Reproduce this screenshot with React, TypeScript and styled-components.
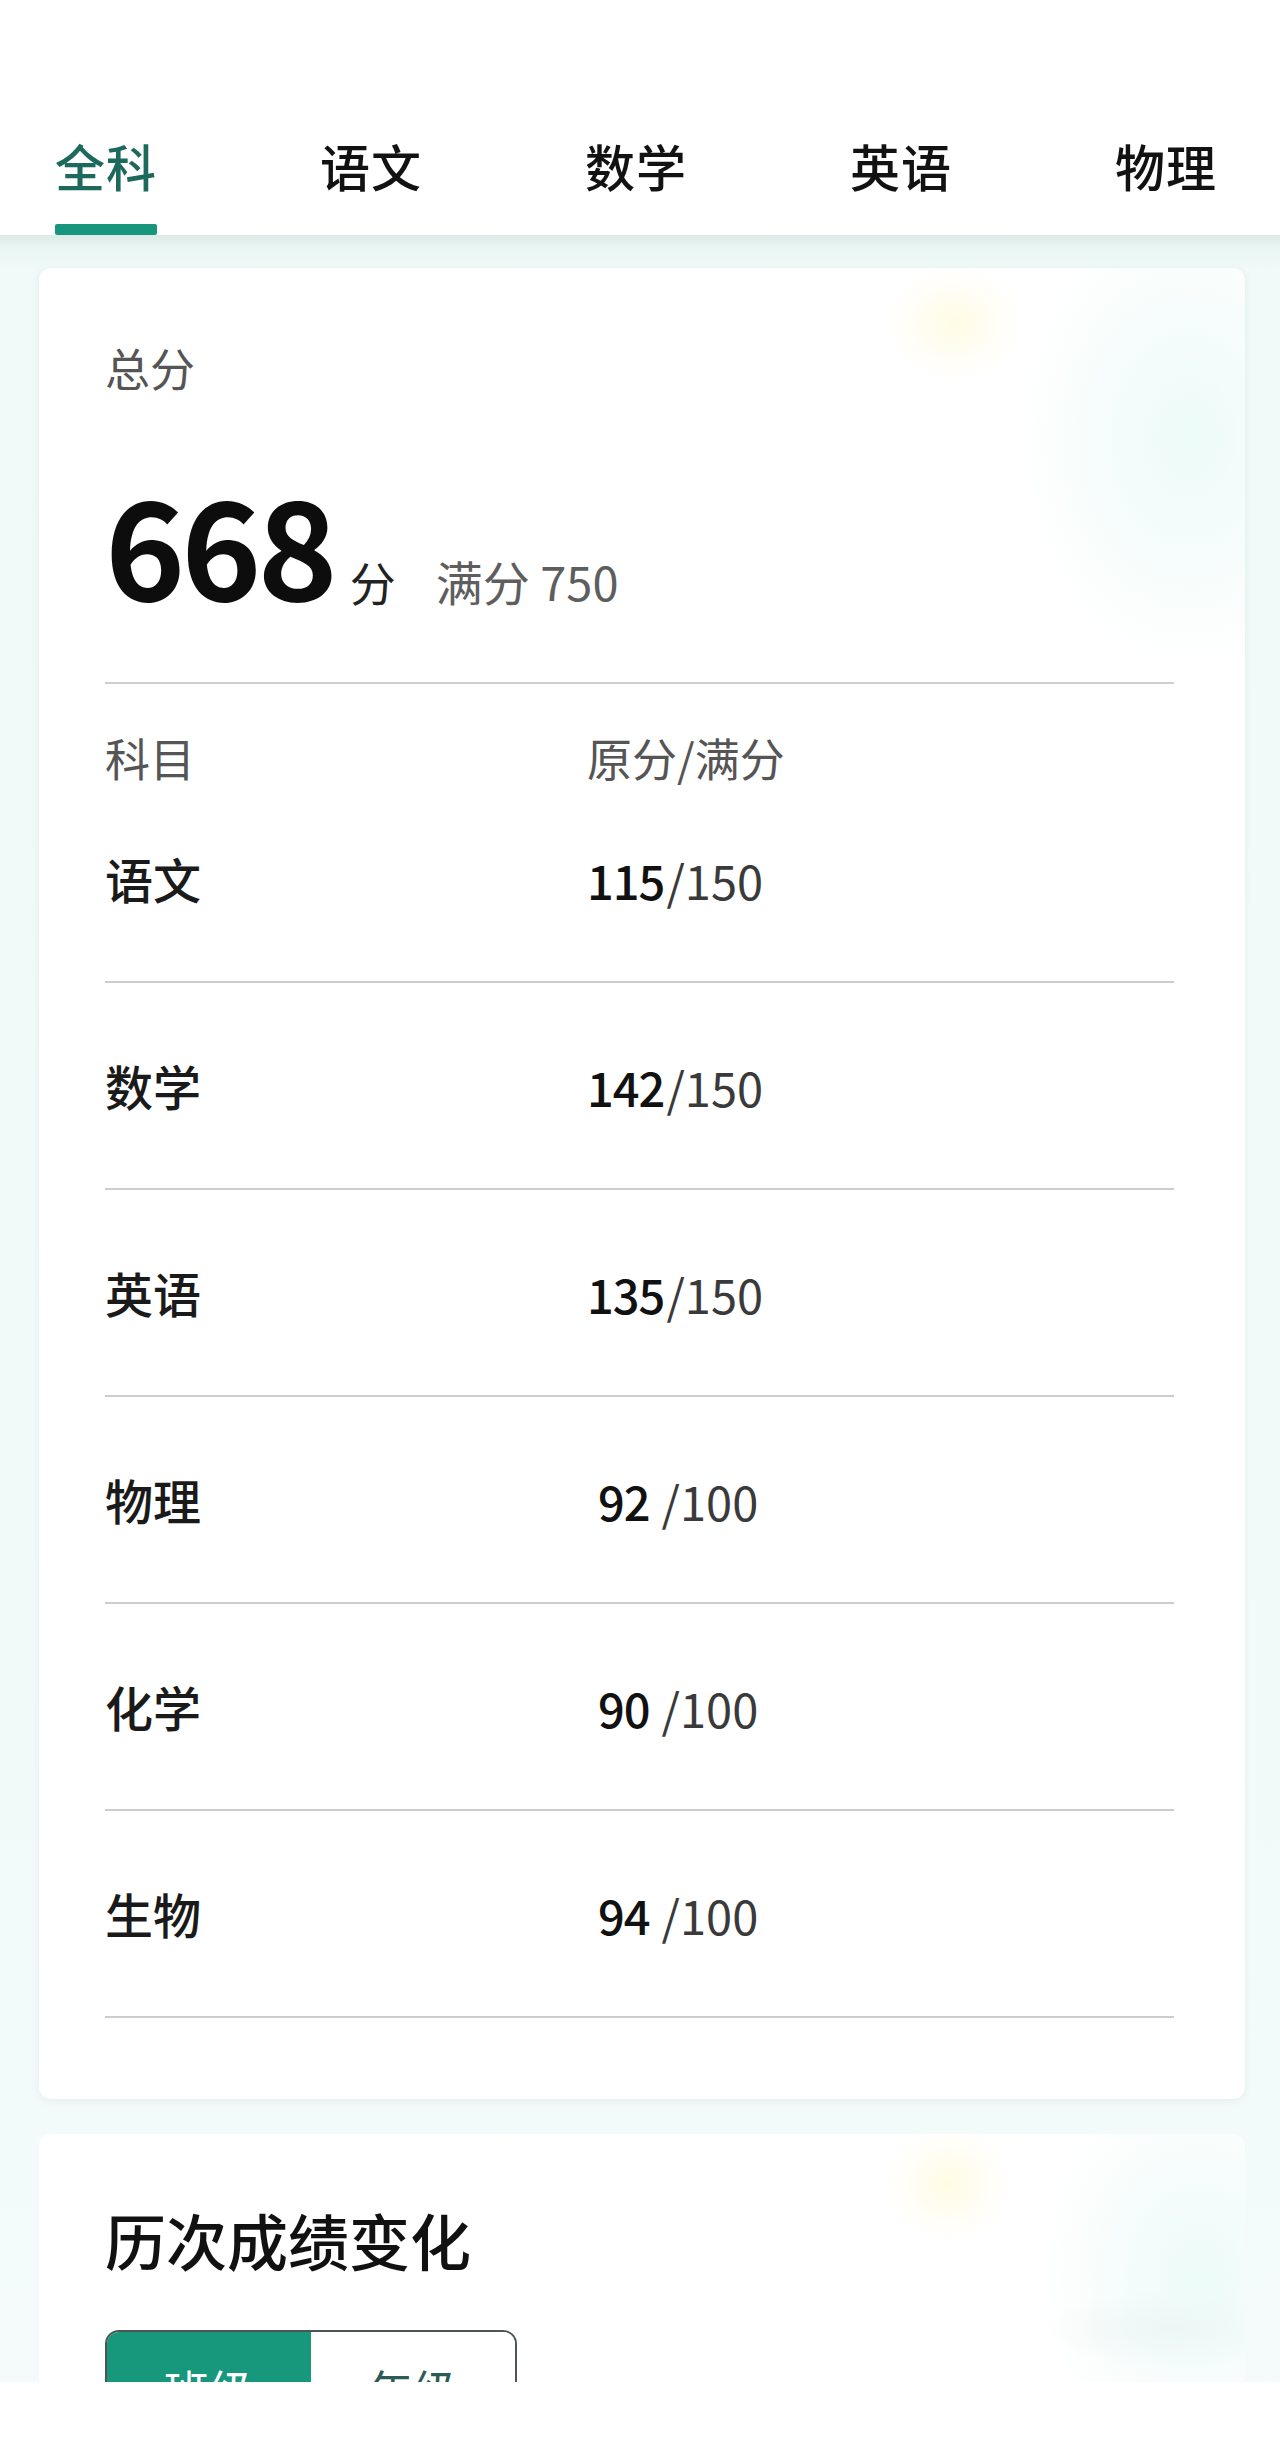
import React from 'react'
import styled, { createGlobalStyle } from 'styled-components'

const GlobalStyle = createGlobalStyle`
  html, body {
    margin: 0;
    padding: 0;
    background: #ffffff;
  }
  body {
    font-family: "Noto Sans CJK SC", "Noto Sans", sans-serif;
    color: #1a1a1a;
  }
`

const tabs = ['全科', '语文', '数学', '英语', '物理']

const scores = [
  { name: '语文', score: '115', full: '150' },
  { name: '数学', score: '142', full: '150' },
  { name: '英语', score: '135', full: '150' },
  { name: '物理', score: '92', full: '100' },
  { name: '化学', score: '90', full: '100' },
  { name: '生物', score: '94', full: '100' },
]

const App = () => {
  return (
    <>
      <GlobalStyle />
      <Screen>
        <Header>
          {tabs.map((t, i) => (
            <Tab key={t}>
              <TabLabel active={i === 0}>{t}</TabLabel>
              <TabLine active={i === 0} />
            </Tab>
          ))}
        </Header>

        <Body>
          <Card>
            <TotalLabel>总分</TotalLabel>
            <TotalLine>
              <TotalNum>668</TotalNum>
              <TotalUnit>分</TotalUnit>
              <TotalFull>满分 750</TotalFull>
            </TotalLine>
            <Divider />

            <HeadRow>
              <NameCol>科目</NameCol>
              <HeadLabel>原分/满分</HeadLabel>
            </HeadRow>

            {scores.map((s, i) => (
              <Row key={s.name} first={i === 0}>
                <NameCol>
                  <RowName>{s.name}</RowName>
                </NameCol>
                <Value>
                  <Score short={s.score.length < 3}>{s.score}</Score>
                  <Full>/{s.full}</Full>
                </Value>
              </Row>
            ))}
          </Card>

          <HistoryCard>
            <HistoryTitle>历次成绩变化</HistoryTitle>
            <Segment>
              <SegButton active>班级</SegButton>
              <SegButton>年级</SegButton>
            </Segment>
          </HistoryCard>
        </Body>
      </Screen>
    </>
  )
}

export default App

const Screen = styled.div`
  width: 1280px;
  height: 2382px;
  overflow: hidden;
  background: #f3fbf9;
`

const Header = styled.div`
  height: 235px;
  background: #ffffff;
  display: flex;
  align-items: flex-end;
  gap: 163px;
  padding-left: 55px;
  box-sizing: border-box;
`

const Tab = styled.div`
  display: flex;
  flex-direction: column;
  align-items: center;
  gap: 34px;
`

const TabLabel = styled.div<{ active?: boolean }>`
  font-size: 50px;
  line-height: 50px;
  font-weight: 500;
  letter-spacing: 1px;
  color: ${({ active }) => (active ? '#1d6a5c' : '#121212')};
`

const TabLine = styled.div<{ active?: boolean }>`
  width: 102px;
  height: 11px;
  border-radius: 2px;
  background: ${({ active }) => (active ? '#17967d' : 'transparent')};
`

const Body = styled.div`
  padding: 33px 35px 0 39px;
  background: linear-gradient(180deg, #dcebe7 0px, #e9f6f3 14px, #f0faf8 34px, #f4fbfa 100%);
`

const Card = styled.div`
  background:
    radial-gradient(ellipse 70px 60px at 915px 55px, rgba(255, 248, 205, 0.55) 0px, rgba(255, 250, 225, 0.25) 45px, rgba(255, 255, 255, 0) 100%),
    radial-gradient(ellipse 170px 230px at 1150px 170px, rgba(232, 250, 247, 0.8) 0px, rgba(240, 251, 249, 0.45) 110px, rgba(255, 255, 255, 0) 100%),
    #ffffff;
  border-radius: 12px;
  box-shadow: 0 2px 8px rgba(160, 190, 185, 0.18);
  padding: 73px 71px 81px 66px;
`

const TotalLabel = styled.div`
  font-size: 45px;
  line-height: 53px;
  color: #555555;
`

const TotalLine = styled.div`
  margin-top: 80px;
  height: 148px;
  display: flex;
  align-items: baseline;
`

const TotalNum = styled.span`
  font-size: 136px;
  line-height: 136px;
  font-weight: 700;
  letter-spacing: -4px;
  color: #0d0d0d;
`

const TotalUnit = styled.span`
  font-size: 46px;
  margin-left: 16px;
  color: #222222;
`

const TotalFull = styled.span`
  font-size: 47px;
  margin-left: 40px;
  color: #5e5e5e;
`

const Divider = styled.div`
  margin-top: 60px;
  height: 2px;
  background: #cfcfcf;
`

const HeadRow = styled.div`
  margin-top: 47px;
  height: 53px;
  display: flex;
  align-items: center;
`

const NameCol = styled.div`
  width: 482px;
  font-size: 45px;
  line-height: 53px;
  color: #555555;
`

const HeadLabel = styled.div`
  font-size: 45px;
  line-height: 53px;
  color: #555555;
`

const Row = styled.div<{ first?: boolean }>`
  display: flex;
  align-items: center;
  padding: ${({ first }) => (first ? '68px' : '76px')} 0 75px;
  border-bottom: 2px solid #cdcdcd;
`

const RowName = styled.span`
  font-size: 48px;
  font-weight: 500;
  color: #1a1a1a;
`

const Value = styled.div`
  display: flex;
  align-items: baseline;
  line-height: 53px;
`

const Score = styled.span<{ short?: boolean }>`
  font-size: 47px;
  font-weight: 500;
  color: #111111;
  letter-spacing: -1px;
  margin-left: ${({ short }) => (short ? '11px' : '0px')};
  margin-right: ${({ short }) => (short ? '12px' : '2px')};
`

const Full = styled.span`
  font-size: 47px;
  font-weight: 400;
  color: #3a3a3a;
`

const HistoryCard = styled.div`
  margin-top: 35px;
  background:
    radial-gradient(ellipse 65px 60px at 910px 50px, rgba(255, 248, 205, 0.55) 0px, rgba(255, 250, 225, 0.25) 42px, rgba(255, 255, 255, 0) 100%),
    radial-gradient(ellipse 160px 200px at 1160px 140px, rgba(232, 250, 247, 0.8) 0px, rgba(240, 251, 249, 0.45) 100px, rgba(255, 255, 255, 0) 100%),
    radial-gradient(ellipse 120px 40px at 1130px 195px, rgba(220, 228, 226, 0.5) 0px, rgba(255, 255, 255, 0) 100%),
    #ffffff;
  border-radius: 12px 12px 0 0;
  padding: 71px 66px 0 66px;
  height: 400px;
`

const HistoryTitle = styled.div`
  font-size: 61px;
  line-height: 70px;
  font-weight: 500;
  color: #111111;
`

const Segment = styled.div`
  margin-top: 55px;
  width: 412px;
  height: 118px;
  box-sizing: border-box;
  border: 2px solid #4e5553;
  border-radius: 14px;
  overflow: hidden;
  display: flex;
`

const SegButton = styled.div<{ active?: boolean }>`
  flex: 1;
  display: flex;
  align-items: center;
  justify-content: center;
  font-size: 45px;
  background: ${({ active }) => (active ? '#17977b' : '#ffffff')};
  color: ${({ active }) => (active ? '#ffffff' : '#2c5a55')};
`
